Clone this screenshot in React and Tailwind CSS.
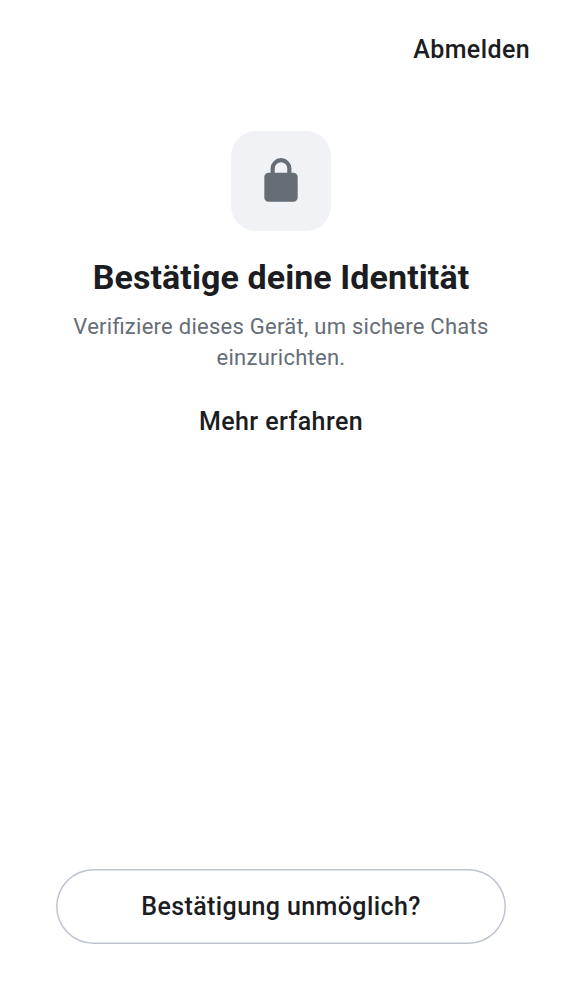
export default function App() {
  return (
    <main className="flex h-[1000px] w-[562px] flex-col items-center bg-white font-['Roboto',sans-serif] text-[#1b1d22]">
      <header className="flex w-full justify-end pt-[32px] pr-[32px]">
        <button className="text-[25px] leading-[36px] font-medium tracking-[0.4px] whitespace-nowrap">Abmelden</button>
      </header>
      <div className="mt-[63px] flex size-[100px] shrink-0 items-center justify-center rounded-[25px] bg-[#f0f2f5]">
        <svg className="size-[50px]" viewBox="0 0 24 24" fill="#656d77" aria-hidden="true">
          <path fillRule="evenodd" d="M6 22a1.93 1.93 0 0 1-1.412-.587A1.93 1.93 0 0 1 4 20V10q0-.825.588-1.412A1.93 1.93 0 0 1 6 8h1V6q0-2.075 1.463-3.537Q9.926 1 12 1t3.537 1.463T17 6v2h1q.825 0 1.413.588Q20 9.175 20 10v10q0 .824-.587 1.413A1.93 1.93 0 0 1 18 22zM9 8h6V6q0-1.25-.875-2.125A2.9 2.9 0 0 0 12 3q-1.25 0-2.125.875A2.9 2.9 0 0 0 9 6z" />
        </svg>
      </div>
      <h1 className="mt-[25px] text-[34px] leading-[43px] font-bold tracking-[0.08px] whitespace-nowrap">Bestätige deine Identität</h1>
      <p className="mt-[12px] text-center text-[22px] leading-[31px] tracking-[0.26px] text-[#656d77] [font-feature-settings:'liga'_1]">
        Verifiziere dieses Gerät, um sichere Chats<br />einzurichten.
      </p>
      <button className="mt-[31px] text-[25px] leading-[36px] font-medium tracking-[0.42px]">Mehr erfahren</button>
      <button className="mt-auto mb-[56px] h-[75px] w-[450px] rounded-full pt-px text-[25px] font-medium tracking-[0.4px] shadow-[inset_0_0_0_1.5px_#bdc3cf]">
        Bestätigung unmöglich?
      </button>
    </main>
  );
}
